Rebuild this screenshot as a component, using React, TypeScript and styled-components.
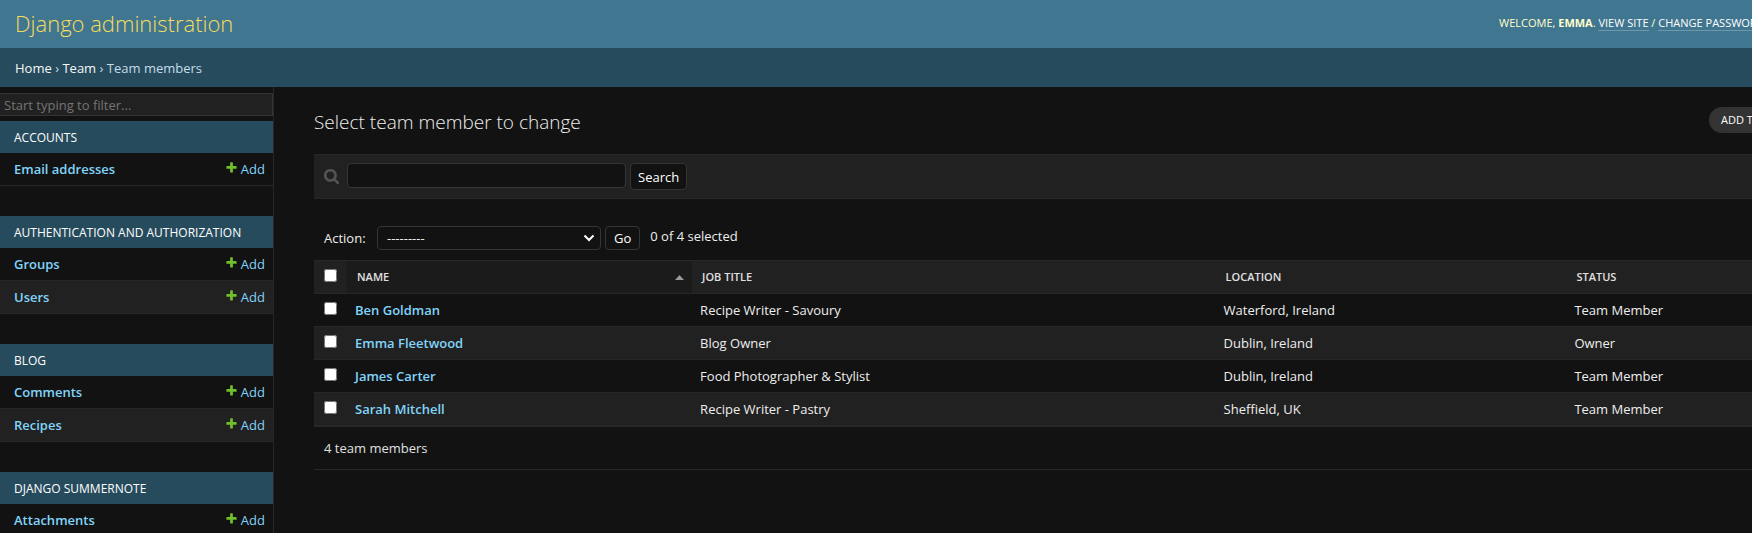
import React from "react";
import styled, { createGlobalStyle } from "styled-components";

const font = '"Open Sans", "Noto Sans", sans-serif';

const GlobalStyle = createGlobalStyle`
  *, *::before, *::after { box-sizing: border-box; }
  body {
    margin: 0;
    background: #121212;
    color: #eeeeee;
    font-family: ${font};
    font-size: 13px;
    line-height: 16px;
  }
  a { color: #81d4fa; text-decoration: none; }
  button, input, select { font-family: ${font}; }
`;

const Container = styled.div`
  display: flex;
  flex-direction: column;
  height: 100vh;
  overflow: hidden;
`;

const Header = styled.header`
  display: flex;
  flex: none;
  align-items: center;
  justify-content: space-between;
  height: 48px;
  padding-left: 15px;
  background: #417690;
  color: #ffffcc;
`;

const SiteName = styled.h1`
  margin: 0;
  padding-bottom: 2px;
  font-size: 22px;
  line-height: 30px;
  font-weight: 300;
  white-space: nowrap;
  a { color: #f5dd5d; }
`;

const UserTools = styled.div`
  flex: 0 0 253px;
  overflow: hidden;
  white-space: nowrap;
  font-size: 11px;
  line-height: 16px;
  padding-bottom: 3px;
  text-transform: uppercase;
  a {
    color: #ffffff;
    border-bottom: 1px solid rgba(255, 255, 255, 0.25);
  }
`;

const Breadcrumbs = styled.nav`
  flex: none;
  padding: 11px 15px 9px;
  background: #264b5d;
  color: #c4dce8;
  font-size: 13px;
  line-height: 19px;
  a { color: #f7f7f7; }
`;

const Body = styled.div`
  display: flex;
  flex: 1;
  min-height: 0;
`;

const Sidebar = styled.nav`
  flex: 0 0 274px;
  padding-top: 6px;
  border-right: 1px solid #272727;
  overflow: hidden;
`;

const Filter = styled.input`
  display: block;
  width: 100%;
  height: 23px;
  margin-bottom: 5px;
  padding: 2px 4px;
  border: 1px solid #353535;
  border-left: 0;
  border-radius: 0;
  background: #212121;
  color: #eeeeee;
  font-size: 13px;
  outline: none;
  &::placeholder { color: #757575; }
`;

const Module = styled.table`
  width: 100%;
  margin-bottom: 30px;
  border-collapse: separate;
  border-spacing: 0;
  caption {
    padding: 9px 14px 7px;
    background: #264b5d;
    font-size: 12px;
    line-height: 16px;
    text-align: left;
    text-transform: uppercase;
    white-space: nowrap;
    a { color: #ffffff; }
  }
  th, td {
    padding: 8px 8px 8px 14px;
    border-bottom: 1px solid #272727;
    text-align: left;
  }
  th { font-weight: 600; }
  td { width: 80px; padding-left: 0; }
  tr:nth-child(even) { background: #212121; }
`;

const AddLink = styled.a`
  display: flex;
  justify-content: flex-end;
  gap: 3px;
  svg { display: block; flex: none; }
`;

const Main = styled.main`
  flex: 1;
  min-width: 0;
  padding: 20px 0 0 40px;
`;

const TitleRow = styled.div`
  display: flex;
  justify-content: space-between;
  align-items: flex-start;
  margin-bottom: 19px;
`;

const Title = styled.h2`
  margin: 3px 0 0;
  font-size: 19px;
  line-height: 25px;
  font-weight: 300;
  color: #eeeeee;
`;

const AddButtonSlot = styled.div`
  flex: 0 0 43px;
  overflow: hidden;
`;

const AddButton = styled.a`
  display: block;
  width: max-content;
  padding: 5px 12px;
  border-radius: 15px;
  background: #333333;
  color: #ffffff;
  font-size: 11px;
  line-height: 16px;
  font-weight: 500;
  text-transform: uppercase;
  white-space: nowrap;
`;

const Toolbar = styled.form`
  display: flex;
  align-items: flex-start;
  height: 45px;
  padding: 8px 10px;
  border-top: 1px solid #272727;
  border-bottom: 1px solid #272727;
  background: #212121;
`;

const SearchLabel = styled.label`
  display: flex;
  width: 23px;
  padding-top: 6px;
`;

const SearchInput = styled.input`
  width: 279px;
  height: 25px;
  margin-right: 4px;
  padding: 2px 5px;
  border: 1px solid #353535;
  border-radius: 4px;
  background: #121212;
  color: #eeeeee;
  font-size: 13px;
  outline: none;
`;

const Button = styled.button<{ $tall?: boolean }>`
  height: ${(p) => (p.$tall ? 27 : 24)}px;
  padding: 0 ${(p) => (p.$tall ? 7 : 8)}px;
  border: 1px solid #353535;
  border-radius: 4px;
  background: #121212;
  color: #ffffff;
  font-size: 13px;
  line-height: 16px;
`;

const Actions = styled.div`
  display: flex;
  align-items: center;
  gap: 4px;
  padding: 27px 10px 10px;
  label { width: 49px; }
`;

const SelectBox = styled.div`
  position: relative;
  width: 224px;
  height: 24px;
  svg { position: absolute; right: 6px; top: 8px; pointer-events: none; }
`;

const Select = styled.select`
  display: block;
  width: 100%;
  height: 24px;
  padding: 0 9px;
  border: 1px solid #353535;
  border-radius: 4px;
  appearance: none;
  background: #121212;
  color: #eeeeee;
  font-size: 13px;
`;

const Counter = styled.span`
  padding: 0 0 4px 6px;
`;

const Results = styled.table`
  width: 100%;
  table-layout: fixed;
  border-collapse: separate;
  border-spacing: 0;
  thead th {
    padding: 8px 10px;
    border-top: 1px solid #272727;
    border-bottom: 1px solid #272727;
    background: #212121;
    color: #e0e0e0;
    font-size: 11px;
    line-height: 16px;
    font-weight: 600;
    text-align: left;
    text-transform: uppercase;
    a { color: #e0e0e0; }
  }
  thead th.sorted { background: #1b1b1b; }
  tbody th, tbody td {
    padding: 8px;
    border-bottom: 1px solid #272727;
    text-align: left;
  }
  tbody th { font-weight: 600; }
  thead th.check, tbody td.check { padding: 8px 10px; line-height: 0; vertical-align: top; }
  tbody tr:nth-child(even) { background: #212121; }
`;

const Check = styled.input`
  display: block;
  width: 13px;
  height: 13px;
  margin: 0;
`;

const SortHead = styled.div`
  display: flex;
  align-items: center;
  justify-content: space-between;
  margin-right: -2px;
`;

const Paginator = styled.p`
  margin: 0;
  padding: 13px 10px;
  border-top: 1px solid #272727;
  border-bottom: 1px solid #272727;
  color: #e0e0e0;
`;

const modules = [
  { name: "Accounts", models: ["Email addresses"] },
  { name: "Authentication and Authorization", models: ["Groups", "Users"] },
  { name: "Blog", models: ["Comments", "Recipes"] },
  { name: "Django Summernote", models: ["Attachments"] },
];

const members = [
  ["Ben Goldman", "Recipe Writer - Savoury", "Waterford, Ireland", "Team Member"],
  ["Emma Fleetwood", "Blog Owner", "Dublin, Ireland", "Owner"],
  ["James Carter", "Food Photographer & Stylist", "Dublin, Ireland", "Team Member"],
  ["Sarah Mitchell", "Recipe Writer - Pastry", "Sheffield, UK", "Team Member"],
];

const PlusIcon = () => (
  <svg width="13" height="13" viewBox="0 0 1792 1792" aria-hidden="true">
    <path
      fill="#70bf2b"
      d="M1600 796v192q0 40-28 68t-68 28h-416v416q0 40-28 68t-68 28h-192q-40 0-68-28t-28-68v-416h-416q-40 0-68-28t-28-68v-192q0-40 28-68t68-28h416v-416q0-40 28-68t68-28h192q40 0 68 28t28 68v416h416q40 0 68 28t28 68z"
    />
  </svg>
);

const SearchIcon = () => (
  <svg width="15" height="15" viewBox="64 128 1664 1664" aria-hidden="true">
    <path
      fill="#555555"
      stroke="#555555"
      strokeWidth="40"
      d="M1216 832q0-185-131.500-316.500t-316.500-131.500-316.500 131.500-131.500 316.500 131.500 316.500 316.500 131.500 316.500-131.500 131.500-316.500zm512 832q0 52-38 90t-90 38q-54 0-90-38l-343-342q-179 124-399 124-143 0-273.500-55.500t-225-150-150-225-55.500-273.500 55.500-273.500 150-225 225-150 273.500-55.500 273.500 55.500 225 150 150 225 55.500 273.500q0 220-124 399l343 343q37 37 37 90z"
    />
  </svg>
);

export default function App() {
  return (
    <Container>
      <GlobalStyle />
      <Header>
        <SiteName>
          <a href="#home">Django administration</a>
        </SiteName>
        <UserTools>
          Welcome, <strong>Emma</strong>. <a href="#site">View site</a> /{" "}
          <a href="#password">Change password</a>
        </UserTools>
      </Header>
      <Breadcrumbs aria-label="Breadcrumbs">
        <a href="#home">Home</a> › <a href="#team">Team</a> › Team members
      </Breadcrumbs>
      <Body>
        <Sidebar aria-label="Models">
          <Filter type="search" placeholder="Start typing to filter..." aria-label="Filter navigation items" />
          {modules.map((m) => (
            <Module key={m.name}>
              <caption>
                <a href="#app">{m.name}</a>
              </caption>
              <tbody>
                {m.models.map((model) => (
                  <tr key={model}>
                    <th scope="row">
                      <a href="#model">{model}</a>
                    </th>
                    <td>
                      <AddLink href="#add">
                        <PlusIcon />
                        Add
                      </AddLink>
                    </td>
                  </tr>
                ))}
              </tbody>
            </Module>
          ))}
        </Sidebar>
        <Main>
          <TitleRow>
            <Title>Select team member to change</Title>
            <AddButtonSlot>
              <AddButton href="#add-member">Add team member</AddButton>
            </AddButtonSlot>
          </TitleRow>
          <Toolbar role="search" onSubmit={(e) => e.preventDefault()}>
            <SearchLabel htmlFor="searchbar" aria-label="Search">
              <SearchIcon />
            </SearchLabel>
            <SearchInput id="searchbar" type="text" />
            <Button $tall type="submit">Search</Button>
          </Toolbar>
          <Actions>
            <label htmlFor="action">Action:</label>
            <SelectBox>
              <Select id="action" defaultValue="">
                <option value="">---------</option>
              </Select>
              <svg width="12" height="8" viewBox="0 0 12 8" fill="none" aria-hidden="true">
                <path d="M1.500 1.500 6 6l4.500-4.500" stroke="#ffffff" strokeWidth="2" />
              </svg>
            </SelectBox>
            <Button type="button">Go</Button>
            <Counter>0 of 4 selected</Counter>
          </Actions>
          <Results>
            <colgroup>
              <col width="33" />
              <col width="24%" />
              <col width="36.4%" />
              <col width="24.4%" />
              <col />
            </colgroup>
            <thead>
              <tr>
                <th className="check" scope="col">
                  <Check type="checkbox" aria-label="Select all" />
                </th>
                <th className="sorted" scope="col">
                  <SortHead>
                    <a href="#sort-name">Name</a>
                    <svg width="9" height="5" viewBox="0 0 9 5" aria-hidden="true">
                      <path d="M0 5 4.500 0 9 5z" fill="#999999" />
                    </svg>
                  </SortHead>
                </th>
                <th scope="col"><a href="#sort-title">Job title</a></th>
                <th scope="col"><a href="#sort-location">Location</a></th>
                <th scope="col"><a href="#sort-status">Status</a></th>
              </tr>
            </thead>
            <tbody>
              {members.map(([name, title, location, status]) => (
                <tr key={name}>
                  <td className="check">
                    <Check type="checkbox" aria-label={`Select ${name}`} />
                  </td>
                  <th scope="row"><a href="#member">{name}</a></th>
                  <td>{title}</td>
                  <td>{location}</td>
                  <td>{status}</td>
                </tr>
              ))}
            </tbody>
          </Results>
          <Paginator>4 team members</Paginator>
        </Main>
      </Body>
    </Container>
  );
}
